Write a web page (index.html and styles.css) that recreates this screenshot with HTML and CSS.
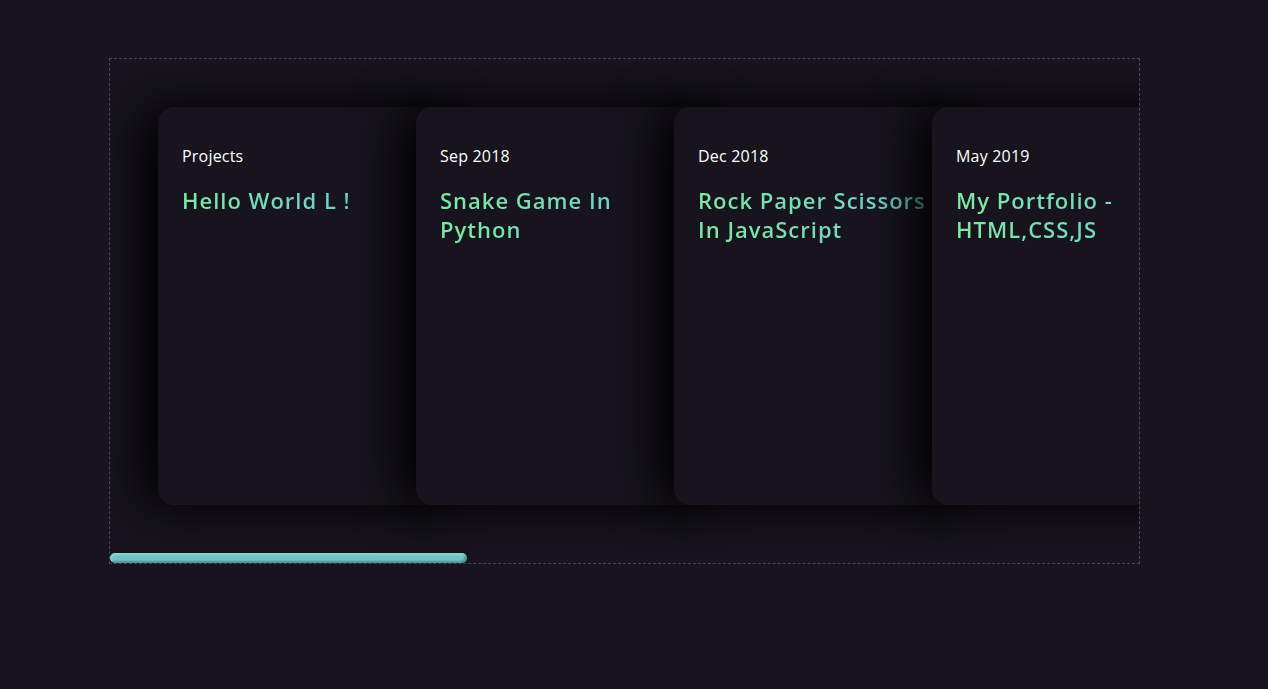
FILE: index.html
```html
<!DOCTYPE html>
<html lang="en">
<head>
<meta charset="utf-8">
<title>Projects</title>
<link rel="stylesheet" href="styles.css">
</head>
<body>
<section class="scroller">
  <div class="card-list">
    <article class="card">
      <p class="card-meta">Projects</p>
      <h2 class="card-title">Hello World L !</h2>
    </article>
    <article class="card">
      <p class="card-meta">Sep 2018</p>
      <h2 class="card-title">Snake Game In Python</h2>
    </article>
    <article class="card">
      <p class="card-meta">Dec 2018</p>
      <h2 class="card-title">Rock Paper Scissors In JavaScript</h2>
    </article>
    <article class="card">
      <p class="card-meta">May 2019</p>
      <h2 class="card-title">My Portfolio - HTML,CSS,JS</h2>
    </article>
  </div>
  <div class="track"><div class="thumb"></div></div>
</section>
</body>
</html>
```
FILE: styles.css
```css
html, body {
  margin: 0;
  background: #17141d;
}
body {
  padding: 58px 0 0 109px;
  font-family: "Open Sans", "Lato", sans-serif;
  color: #fff;
}
.scroller {
  box-sizing: border-box;
  width: 1031px;
  border: 1px dashed #4a4751;
  display: flex;
  flex-direction: column;
}
.card-list {
  display: flex;
  padding: 48px;
  overflow: hidden;
}
.card {
  flex: 0 0 300px;
  box-sizing: border-box;
  height: 398px;
  padding: 24px 28px 24px 24px;
  border-radius: 16px;
  background: #17141d;
  box-shadow: -1rem 0 3rem #000;
  display: flex;
  flex-direction: column;
  align-items: flex-start;
}
.card + .card {
  margin-left: -42px;
}
.card-meta {
  margin: 15px 0 0;
  font-size: 16px;
  line-height: 20px;
  letter-spacing: 0.2px;
}
.card-title {
  margin: 20px 0 0;
  font-size: 22px;
  line-height: 29px;
  font-weight: 600;
  letter-spacing: 1px;
  display: inline-block;
  background: linear-gradient(90deg, #7ceaa5, #6fcdcb);
  -webkit-background-clip: text;
  background-clip: text;
  -webkit-text-fill-color: transparent;
  color: transparent;
}
.track {
  height: 10px;
}
.thumb {
  width: 357px;
  height: 10px;
  border-radius: 10px;
  background: #6ec5c3;
  box-shadow: inset 2px 2px 2px rgba(255,255,255,.25), inset -2px -2px 2px rgba(0,0,0,.25);
}
```
